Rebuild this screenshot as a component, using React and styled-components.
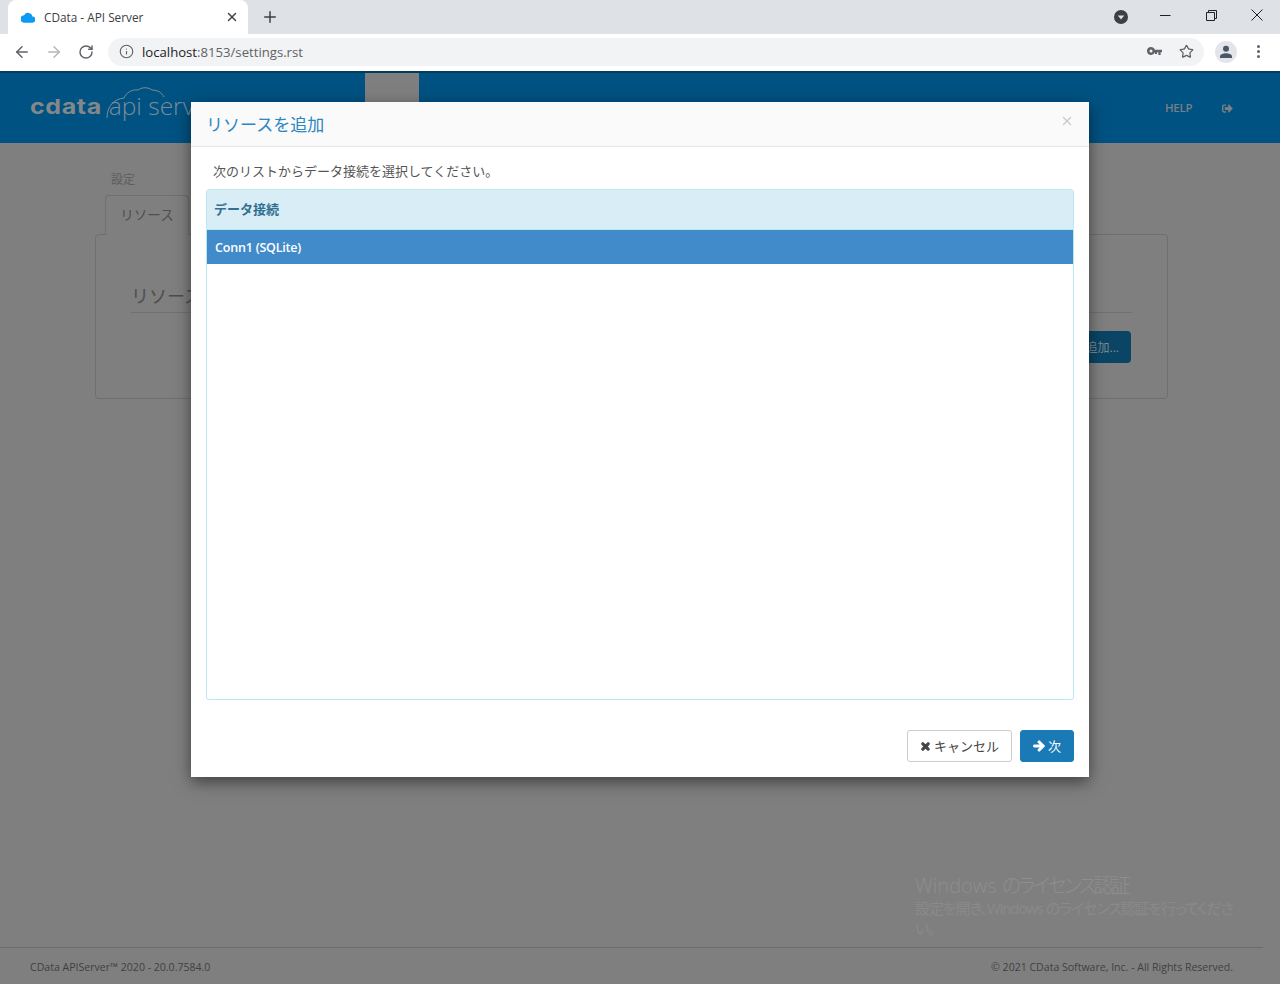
import React from "react";
import styled, { createGlobalStyle } from "styled-components";
import { ArrowLeft, ArrowRight, RotateCw, Plus, X, Star, Info } from "lucide-react";
import { FaTimes, FaArrowRight, FaSignOutAlt } from "react-icons/fa";

const JP = `"Open Sans", "Noto Sans CJK JP", sans-serif`;

const Global = createGlobalStyle`
  html, body { margin: 0; padding: 0; background: #7f7f7f; }
  * { box-sizing: border-box; }
  body { font-family: ${JP}; }
`;

const Screen = styled.div`
  width: 1280px; height: 984px; overflow: hidden;
  display: flex; flex-direction: column; position: relative;
`;

/* ---------- browser chrome ---------- */
const TabStrip = styled.div`
  height: 34px; background: #dee1e6; display: flex; align-items: flex-end;
  padding-left: 8px; flex: none;
`;
const Tab = styled.div`
  width: 240px; height: 34px; background: #fff; border-radius: 8px 8px 0 0;
  display: flex; align-items: center; padding: 0 9px 0 13px;
  font: 11.8px "Open Sans", sans-serif; color: #3c4043;
`;
const TabTitle = styled.span`margin-left: 9px; flex: 1; `;
const NewTab = styled.div`
  width: 44px; height: 34px; display: flex; align-items: center; justify-content: center; color: #3c4043;
`;
const StripSpacer = styled.div`flex: 1;`;
const WindowControls = styled.div`
  display: flex; align-items: center; height: 34px; color: #202124;
`;
const ProfileDot = styled.div`width: 16px; height: 16px; margin-right: 13px; display: flex;`;
const WinButton = styled.div`
  width: 46px; height: 34px; display: flex; align-items: center; justify-content: center; padding-bottom: 4px;
`;
const Toolbar = styled.div`
  height: 37px; background: #fff; display: flex; align-items: center; flex: none; padding: 0 0 2px 6px;
`;
const NavButton = styled.div`
  width: 32px; height: 32px; display: flex; align-items: center; justify-content: center;
  color: ${p => (p.$disabled ? "#b5b7ba" : "#5f6368")};
`;
const Omnibox = styled.div`
  margin-left: 6px; width: 1096px; height: 28px; border-radius: 14px; background: #f1f3f4;
  display: flex; align-items: center; padding: 0 10px 0 11px; color: #5f6368; gap: 8px;
`;
const Url = styled.span`
  flex: 1; font: 13.15px "Open Sans", sans-serif; color: #5f6368;
  b { font-weight: 400; color: #202124; }
`;
const Avatar = styled.div`
  width: 22px; height: 22px; margin-left: 11px; border-radius: 50%; background: #e3e5e9;
  display: flex; align-items: center; justify-content: center; flex: none;
`;
const Kebab = styled.div`
  margin-left: 20px; width: 4px; display: flex; flex-direction: column; gap: 2px;
  i { width: 3px; height: 3px; border-radius: 50%; background: #5f6368; display: block; }
`;

/* ---------- dimmed page ---------- */
const Page = styled.div`
  flex: 1; position: relative; background: #7f7f7f; display: flex; flex-direction: column; min-height: 0;
`;
const AppHeader = styled.header`
  height: 72px; flex: none; background: #005282; border-top: 2px solid #003d61;
  display: flex; padding-left: 30px; color: #7f7f7f;
`;
const Logo = styled.div`
  position: relative; display: flex; align-items: baseline; height: 70px; padding-top: 17px; width: 335px;
`;
const LogoMark = styled.span`
  display: inline-block; font: 700 25px/32px Inter, sans-serif; letter-spacing: 0.6px; color: #85888a;
  transform: scaleY(.82) translateY(-1px); transform-origin: 50% 70%;
`;
const LogoProduct = styled.span`
  margin-left: 7px; font: 300 24.5px/32px "Open Sans", sans-serif; color: #7d8c97; white-space: nowrap;
`;
const LogoCloud = styled.svg`
  position: absolute; left: 76px; top: 13px;
`;
const NavSlot = styled.div`width: 54px; height: 29px; background: #7f7f7f; flex: none;`;
const HeaderRight = styled.div`
  margin-left: auto; padding: 27px 47px 0 0; display: flex; gap: 29px; font: 600 11.5px/16px "Open Sans", sans-serif;
  color: #7a7f85; align-items: flex-start;
`;
const HelpLink = styled.span`width: 28px; letter-spacing: -0.3px;`;
const Content = styled.main`
  flex: 1; padding: 27px 112px 0 95px; min-height: 0;
`;
const Crumb = styled.div`
  font-size: 12px; line-height: 16px; color: #5e5e5e; padding: 2px 0 0 16px; height: 25px;
`;
const TabBar = styled.div`padding-left: 10px; display: flex; height: 40px; margin-bottom: -1px; position: relative;`;
const PageTab = styled.div`
  width: 84px; height: 40px; border: 1px solid #6f6f6f; border-bottom: 0; border-radius: 4px 4px 0 0;
  background: #7f7f7f; font-size: 13.5px; line-height: 38px; text-align: center; color: #4f4f4f;
`;
const Card = styled.section`
  width: 1073px; height: 165px; border: 1px solid #6f6f6f; border-radius: 4px; padding: 46px 35px 0 35px;
`;
const CardTitle = styled.h2`
  margin: 0; font-size: 18px; font-weight: 400; line-height: 30px; height: 32px; color: #4d4d4d;
  border-bottom: 1px solid #707070;
`;
const AddRow = styled.div`display: flex; justify-content: flex-end; margin-top: 18px; padding-right: 1px;`;
const AddButton = styled.div`
  height: 32px; width: 80px; background: #0a4566; border-radius: 4px; color: #7f8a90;
  font-size: 12px; line-height: 33px; text-align: right; padding-right: 12px;
`;
const Footer = styled.footer`
  flex: none; height: 37px; width: 1263px; border-top: 1px solid #6c6c6c; padding: 1px 30px 0;
  display: flex; justify-content: space-between; align-items: center;
  font-size: 10.55px; color: #3f3f3f; 
`;
const Watermark = styled.div`
  position: absolute; left: 915px; top: 803px; width: 319px; color: #8a8a8a; font-size: 15px; line-height: 20px;
  font-family: "Open Sans", "Noto Sans CJK JP", sans-serif; font-weight: 400;
  font-feature-settings: "palt"; letter-spacing: -1.1px;
  strong { display: block; font-weight: 300; font-size: 20px; line-height: 24px; letter-spacing: 0; color: #8e8e8e; }
  strong em { font-style: normal; font-weight: 300; letter-spacing: -2.8px; }
`;

/* ---------- modal ---------- */
const Modal = styled.div`
  position: absolute; left: 191px; top: 31px; width: 898px; height: 675px; background: #fff;
  box-shadow: 0 5px 15px rgba(0,0,0,.5); display: flex; flex-direction: column;
`;
const ModalHeader = styled.div`
  height: 45px; flex: none; background: #fafafa; border-bottom: 1px solid #e5e5e5;
  display: flex; justify-content: space-between; padding: 0 15px 0 15px; align-items: flex-start;
`;
const ModalTitle = styled.h4`
  margin: 0; font-size: 17px; font-weight: 400; line-height: 46px; color: #2c86c0;
`;
const Close = styled.div`color: #c8c8c8; padding-top: 12px; display: flex;`;
const ModalBody = styled.div`
  flex: 1; padding: 14px 15px 0; display: flex; flex-direction: column; min-height: 0;
`;
const Lead = styled.p`
  margin: 0 0 8px; padding-left: 7px; font-size: 13px; line-height: 20px; height: 20px; color: #555;
`;
const ListPanel = styled.div`
  height: 511px; border: 1px solid #bce8f1; border-radius: 3px; overflow: hidden;
`;
const ListHeading = styled.div`
  height: 40px; background: #d9edf7; color: #31708f; font-size: 13px; font-weight: 700; line-height: 38px;
  padding-left: 7px; border-bottom: 1px solid #bce8f1;
`;
const ListRow = styled.div`
  height: 34px; background: #428bca; color: #fff; font-size: 12.5px; font-weight: 600; letter-spacing: -0.2px; line-height: 36px; padding-left: 8px;
`;
const ModalFooter = styled.div`
  display: flex; justify-content: flex-end; gap: 8px; padding: 0 15px 15px; flex: none;
`;
const Button = styled.button`
  height: 32px; padding: 0; width: ${p => p.$w}px; border-radius: 3px; font: 13px/1 ${JP};
  display: flex; align-items: center; justify-content: center; gap: 3px;
  border: 1px solid ${p => (p.$primary ? "#1a7ab5" : "#cccccc")};
  background: ${p => (p.$primary ? "#1a7ab5" : "#fff")};
  color: ${p => (p.$primary ? "#fff" : "#444")};
  svg { stroke: currentColor; stroke-width: 50; }
`;

const Cloud = () => (
  <svg width="14" height="11" viewBox="0 0 24 18"><path fill="#0b9bf0" d="M19.4 7.1A7.5 7.5 0 0 0 5.4 5.1 6.4 6.4 0 0 0 6 18h13a5.4 5.4 0 0 0 .4-10.9z"/></svg>
);

export default function App() {
  return (
    <Screen>
      <Global />
      <TabStrip>
        <Tab>
          <Cloud />
          <TabTitle>CData - API Server</TabTitle>
          <X size={14} strokeWidth={2.4} color="#3c4043" />
        </Tab>
        <NewTab><Plus size={18} strokeWidth={2} /></NewTab>
        <StripSpacer />
        <WindowControls>
          <ProfileDot>
            <svg width="16" height="16" viewBox="0 0 16 16"><circle cx="8" cy="8" r="7" fill="#3c4043"/><path d="M4.8 6.5h6.4L8 10.5z" fill="#dee1e6"/></svg>
          </ProfileDot>
          <WinButton><svg width="11" height="11" viewBox="0 0 11 11"><path d="M0 5.5h10.5" stroke="#202124" fill="none"/></svg></WinButton>
          <WinButton><svg width="11" height="11" viewBox="0 0 11 11"><path d="M.5 2.5h8v8h-8zM2.5 2.5v-2h8v8h-2" stroke="#202124" fill="none"/></svg></WinButton>
          <WinButton><svg width="12" height="12" viewBox="0 0 12 12"><path d="M.5.5l11 11M11.5.5l-11 11" stroke="#202124" fill="none"/></svg></WinButton>
        </WindowControls>
      </TabStrip>
      <Toolbar>
        <NavButton><ArrowLeft size={18} strokeWidth={2} /></NavButton>
        <NavButton $disabled><ArrowRight size={18} strokeWidth={2} /></NavButton>
        <NavButton><RotateCw size={16} strokeWidth={2.2} /></NavButton>
        <Omnibox>
          <Info size={15} strokeWidth={1.8} />
          <Url><b>localhost</b>:8153/settings.rst</Url>
          <svg width="15" height="9" viewBox="0 0 15 9"><path fill="#5f6368" fillRule="evenodd" d="M4 0a4 4 0 0 1 3.8 2.8H15v2.4h-1.4V8h-2.2V5.2H10V7H7.9V5.2h-.1A4 4 0 1 1 4 0zm0 2.5a1.5 1.5 0 1 0 0 3 1.5 1.5 0 0 0 0-3z"/></svg>
          <Star size={15} strokeWidth={2} style={{ marginLeft: 9 }} />
        </Omnibox>
        <Avatar>
          <svg width="14" height="14" viewBox="0 0 14 14"><circle cx="7" cy="3.8" r="3" fill="#4a5568"/><path d="M1 13v-1.6C1 9.4 4.5 8.3 7 8.3s6 1.1 6 3.1V13z" fill="#4a5568"/></svg>
        </Avatar>
        <Kebab><i /><i /><i /></Kebab>
      </Toolbar>
      <Page>
        <AppHeader>
          <Logo>
            <LogoMark>cdata</LogoMark>
            <LogoProduct>api server</LogoProduct>
            <LogoCloud width="90" height="34" viewBox="0 0 90 34" fill="none" stroke="#7d8c97" strokeWidth="1">
              <path d="M1 32C1 20 8 13 18 12C20 7 26 3 32 4C36 1 42 1 46 4C52 4 56 7 58 11" />
            </LogoCloud>
          </Logo>
          <NavSlot />
          <HeaderRight>
            <HelpLink>HELP</HelpLink>
            <FaSignOutAlt size={11} style={{ marginTop: 3 }} />
          </HeaderRight>
        </AppHeader>
        <Content>
          <Crumb>設定</Crumb>
          <TabBar><PageTab>リソース</PageTab></TabBar>
          <Card>
            <CardTitle>リソース</CardTitle>
            <AddRow><AddButton>追加...</AddButton></AddRow>
          </Card>
        </Content>
        <Footer>
          <span>CData APIServer™ 2020 - 20.0.7584.0</span>
          <span>© 2021 CData Software, Inc. - All Rights Reserved.</span>
        </Footer>
        <Watermark>
          <strong>Windows <em>のライセンス認証</em></strong>
          設定を開き、Windows のライセンス認証を行ってください。
        </Watermark>
        <Modal>
          <ModalHeader>
            <ModalTitle>リソースを追加</ModalTitle>
            <Close><X size={14} strokeWidth={2.2} /></Close>
          </ModalHeader>
          <ModalBody>
            <Lead>次のリストからデータ接続を選択してください。</Lead>
            <ListPanel>
              <ListHeading>データ接続</ListHeading>
              <ListRow>Conn1 (SQLite)</ListRow>
            </ListPanel>
          </ModalBody>
          <ModalFooter>
            <Button $w={105}><FaTimes size={11} />キャンセル</Button>
            <Button $w={54} $primary><FaArrowRight size={12} />次</Button>
          </ModalFooter>
        </Modal>
      </Page>
    </Screen>
  );
}
